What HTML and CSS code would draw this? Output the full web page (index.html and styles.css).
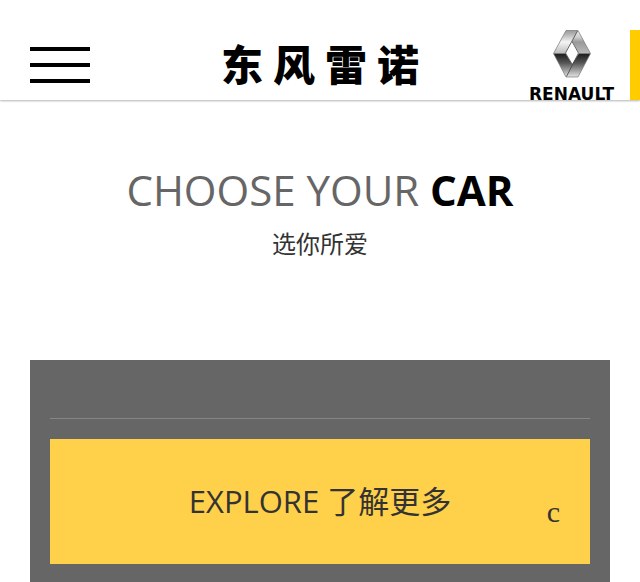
FILE: index.html
```html
<!DOCTYPE html>
<html lang="zh-CN">
<head>
<meta charset="utf-8">
<meta name="viewport" content="width=device-width, initial-scale=1">
<title>东风雷诺</title>
<link rel="stylesheet" href="styles.css">
</head>
<body>
<header class="header">
  <button class="menu" type="button" aria-label="菜单"><span></span><span></span><span></span></button>
  <a class="brand" href="#"><span>东</span><span>风</span><span>雷</span><span>诺</span></a>
  <a class="logo" href="#">
    <svg class="diamond" viewBox="0 0 38 48" aria-hidden="true">
      <defs>
        <linearGradient id="left" x1="0" y1="0" x2="0" y2="1">
          <stop offset="0" stop-color="#999"/><stop offset=".2" stop-color="#bbb"/><stop offset=".5" stop-color="#f4f4f4"/><stop offset="1" stop-color="#bbb"/>
        </linearGradient>
        <linearGradient id="right" x1="0" y1="0" x2="0" y2="1">
          <stop offset="0" stop-color="#f0f0f0"/><stop offset=".3" stop-color="#ccc"/><stop offset=".5" stop-color="#999"/><stop offset="1" stop-color="#bbb"/>
        </linearGradient>
        <linearGradient id="shade" x1="0" y1="0" x2="0" y2="1">
          <stop offset="0" stop-color="#1c1c1c"/><stop offset=".4" stop-color="#555"/><stop offset="1" stop-color="#e4e4e4"/>
        </linearGradient>
      </defs>
      <path fill="url(#left)" d="M13 .5H25L12.500 23.500H.5Z"/>
      <path fill="url(#right)" d="M25 .5 37.500 23.500H26L19 11Z"/>
      <path fill="url(#shade)" d="M.5 23.500H12.500L19 34 26 23.500H37.500L25 47H13Z"/>
      <path fill="#fff" d="M19 11.500 25.500 23 19 34 12.500 23Z"/>
      <path fill="none" stroke="#777" stroke-width=".7" d="M13 .5H25L37.500 23.500 25 47H13L.5 23.500Z"/>
      <path fill="none" stroke="#444" stroke-width=".8" d="M24.500 1 12.500 23 19 34M19 11.500 25.500 23 13.500 46.500"/>
    </svg>
    <span class="wordmark">RENAULT</span>
  </a>
</header>
<main>
  <section class="intro">
    <h1>CHOOSE YOUR <strong>CAR</strong></h1>
    <p>选你所爱</p>
  </section>
  <section class="card">
    <hr>
    <a class="explore" href="#">EXPLORE 了解更多<span class="arrow">c</span></a>
  </section>
</main>
</body>
</html>
```
FILE: styles.css
```css
* {
  box-sizing: border-box;
}

body {
  margin: 0;
  background: #fff;
  color: #333;
  font-family: "Open Sans", "Noto Sans CJK SC", sans-serif;
}

a {
  color: inherit;
  text-decoration: none;
}

.header {
  display: grid;
  grid-template-columns: 1fr auto 1fr;
  height: 100px;
  padding-top: 30px;
  box-shadow: 0 1px 2px rgba(0, 0, 0, .3);
}

.menu {
  display: flex;
  flex-direction: column;
  gap: 12px;
  width: 60px;
  margin: 17px 0 0 30px;
  padding: 0;
  border: 0;
  background: none;
}

.menu span {
  width: 100%;
  height: 4px;
  background: #000;
}

.brand {
  display: flex;
  gap: 10px;
  color: #000;
  font-size: 42px;
  font-weight: 900;
  line-height: 70px;
}

.logo {
  display: flex;
  flex-direction: column;
  align-items: center;
  justify-self: end;
  height: 70px;
  padding: 0 16px;
  border-right: 10px solid #fc0;
  color: #000;
}

.diamond {
  flex: none;
  width: 38px;
  height: 48px;
}

.wordmark {
  margin-top: 7px;
  font: bold 17px/18px "DejaVu Sans", sans-serif;
}

.intro {
  padding: 60px 30px 0;
  text-align: center;
}

h1 {
  margin: 0;
  color: #666;
  font-size: 42px;
  font-weight: 400;
  line-height: 60px;
}

h1 strong {
  color: #000;
  font-weight: 700;
}

.intro p {
  margin: 6px 0 0;
  font-size: 24px;
  line-height: 36px;
}

.card {
  margin: 98px 30px 0;
  padding: 58px 20px 20px;
  background: #666;
}

hr {
  margin: 0 0 20px;
  border: 0;
  border-top: 1px solid #858585;
}

.explore {
  position: relative;
  display: block;
  background: #ffd04a;
  font-size: 31px;
  line-height: 125px;
  text-align: center;
}

.arrow {
  position: absolute;
  top: 10px;
  right: 30px;
  font-family: "Liberation Serif", serif;
  font-size: 30px;
}
```
